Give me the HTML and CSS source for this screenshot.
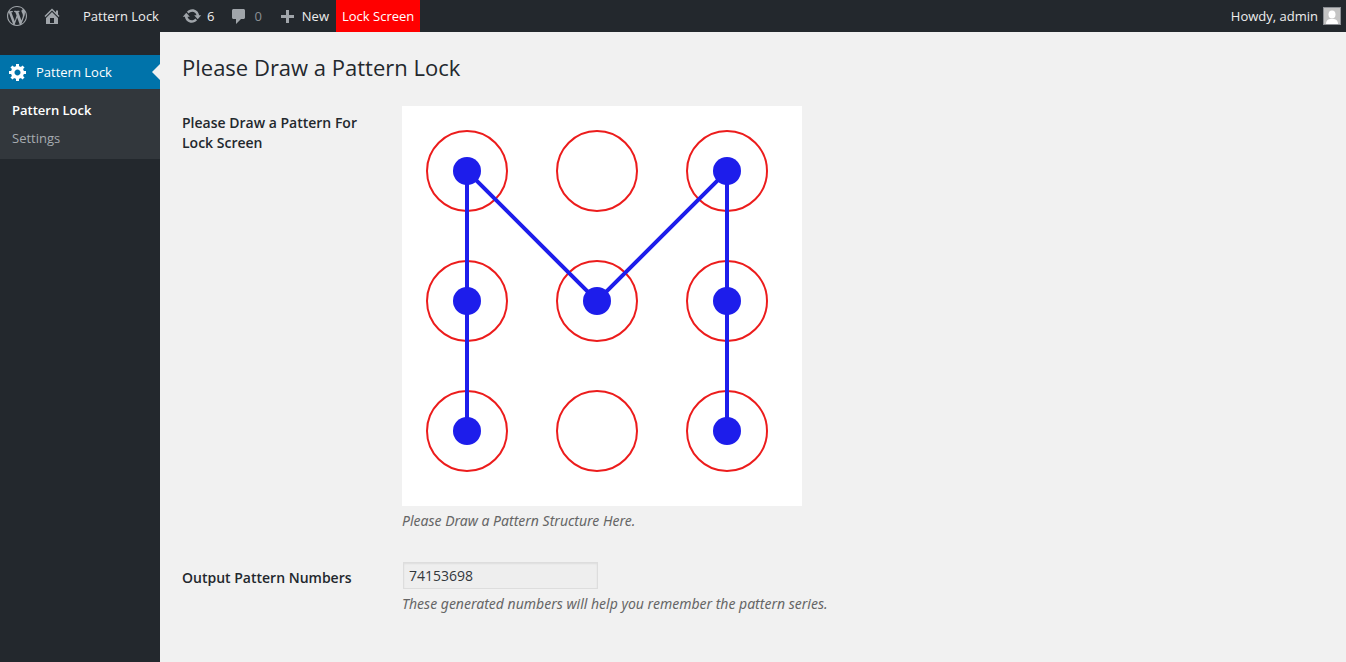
FILE: index.html
```
<!DOCTYPE html>
<html lang="en">
<head>
    <meta charset="UTF-8">
    <meta name="viewport" content="width=device-width, initial-scale=1.0">
    <title>Pattern Lock</title>
    <link rel="stylesheet" href="styles.css">
</head>
<body>
    <!-- admin bar -->
    <header class="adminbar">
        <a href="#" class="bar-item bar-logo" aria-label="WordPress">
            <svg class="icon" viewBox="0 0 20 20"><path d="M20 10c0-5.51-4.49-10-10-10C4.48 0 0 4.49 0 10c0 5.52 4.48 10 10 10 5.51 0 10-4.48 10-10zM7.78 15.37L4.37 6.22c.55-.02 1.17-.08 1.17-.08.5-.06.44-1.13-.06-1.11 0 0-1.45.11-2.37.11-.18 0-.37 0-.58-.01C4.12 2.69 6.87 1.11 10 1.11c2.33 0 4.45.87 6.05 2.34-.68-.11-1.65.39-1.65 1.58 0 .74.45 1.36.9 2.1.35.61.55 1.36.55 2.46 0 1.49-1.4 5-1.4 5l-3.03-8.37c.54-.02.82-.17.82-.17.5-.05.44-1.25-.06-1.22 0 0-1.44.12-2.38.12-.87 0-2.33-.12-2.33-.12-.5-.03-.56 1.2-.06 1.22l.92.08 1.26 3.41zM17.41 10c.24-.64.74-1.87.43-4.25.7 1.29 1.05 2.71 1.05 4.25 0 3.29-1.73 6.24-4.4 7.78.97-2.59 1.94-5.2 2.92-7.78zM6.1 18.09C3.12 16.65 1.11 13.53 1.11 10c0-1.3.23-2.48.72-3.59C3.25 10.3 4.67 14.2 6.1 18.09zm4.03-6.63l2.58 6.98c-.86.29-1.76.45-2.71.45-.79 0-1.57-.11-2.29-.33.81-2.38 1.62-4.74 2.42-7.1z"/></svg>
        </a>
        <a href="#" class="bar-item bar-site">
            <svg class="icon" viewBox="0 0 20 20"><path d="M16 8.5l1.53 1.53-1.06 1.06L10 4.6l-6.47 6.49-1.06-1.06L10 2.5l4 4v-2h2v4zm-6-2.46l6 5.99V18H4v-5.97zM12 17v-5H8v5h4z"/></svg>
            <span class="site-name">Pattern Lock</span>
        </a>
        <a href="#" class="bar-item bar-updates">
            <svg class="icon" viewBox="0 0 20 20"><path d="M10.2 3.28c3.53 0 6.43 2.61 6.92 6h2.08l-3.5 4-3.5-4h2.32c-.45-1.97-2.21-3.45-4.32-3.45-1.45 0-2.73.71-3.54 1.78L4.95 5.66C6.23 4.2 8.11 3.28 10.2 3.28zm-.4 13.44c-3.52 0-6.43-2.61-6.92-6H.8l3.5-4c1.17 1.33 2.33 2.67 3.5 4H5.48c.45 1.97 2.21 3.45 4.32 3.45 1.45 0 2.73-.71 3.54-1.78l1.71 1.95c-1.28 1.46-3.15 2.38-5.25 2.38z"/></svg>
            <span>6</span>
        </a>
        <a href="#" class="bar-item bar-comments">
            <svg class="icon" viewBox="0 0 20 20"><path d="M4.500 3h10c.8 0 1.500.7 1.500 1.500v7c0 .8-.7 1.500-1.500 1.500H12l-5 5v-5H4.500C3.700 13 3 12.300 3 11.500v-7C3 3.700 3.700 3 4.500 3z"/></svg>
            <span>0</span>
        </a>
        <a href="#" class="bar-item bar-new">
            <svg class="icon" viewBox="0 0 20 20"><path d="M17 9v3h-5v5H9v-5H4V9h5V4h3v5h5z"/></svg>
            <span>New</span>
        </a>
        <a href="#" class="bar-item bar-lock">Lock Screen</a>
        <a href="#" class="bar-item bar-account">
            <span>Howdy, admin</span>
            <svg class="avatar" viewBox="0 0 18 18">
                <rect width="18" height="18" fill="#8c8f94"/>
                <rect x="1" y="1" width="16" height="16" fill="#c4c4c4"/>
                <ellipse cx="9" cy="7.500" rx="3.500" ry="4" fill="#fff"/>
                <path d="M3 17c0-3 1.500-4.500 4-5h4c2.500.5 4 2 4 5z" fill="#fff"/>
            </svg>
        </a>
    </header>

    <div class="wrapper">
        <!-- side menu -->
        <nav class="sidebar">
            <a href="#" class="menu-top">
                <svg class="icon" viewBox="0 0 20 20"><path d="M18 12h-2.18c-.17.7-.44 1.35-.81 1.93l1.54 1.54-2.1 2.1-1.54-1.54c-.58.36-1.23.63-1.91.79V19H8v-2.18c-.68-.16-1.33-.43-1.91-.79l-1.54 1.54-2.12-2.12 1.54-1.54c-.36-.58-.63-1.23-.79-1.91H1V9.03h2.17c.16-.7.44-1.35.8-1.94L2.43 5.55l2.1-2.1 1.54 1.54c.58-.37 1.24-.64 1.93-.81V2h3v2.18c.68.16 1.33.43 1.91.79l1.54-1.54 2.12 2.12-1.54 1.54c.36.59.64 1.24.8 1.94H18V12zm-8.5 1.5c1.66 0 3-1.34 3-3s-1.34-3-3-3-3 1.34-3 3 1.34 3 3 3z"/></svg>
                <span>Pattern Lock</span>
            </a>
            <ul class="submenu">
                <li><a href="#" class="current">Pattern Lock</a></li>
                <li><a href="#">Settings</a></li>
            </ul>
        </nav>

        <main class="content">
            <h1>Please Draw a Pattern Lock</h1>

            <form class="form">
                <div class="form-row">
                    <div class="form-label">Please Draw a Pattern For Lock Screen</div>
                    <div class="form-field">
                        <svg class="pattern" viewBox="0 0 400 400" role="img" aria-label="Pattern 74153698">
                            <g class="ring">
                                <circle cx="65" cy="65" r="40"/>
                                <circle cx="195" cy="65" r="40"/>
                                <circle cx="325" cy="65" r="40"/>
                                <circle cx="65" cy="195" r="40"/>
                                <circle cx="195" cy="195" r="40"/>
                                <circle cx="325" cy="195" r="40"/>
                                <circle cx="65" cy="325" r="40"/>
                                <circle cx="195" cy="325" r="40"/>
                                <circle cx="325" cy="325" r="40"/>
                            </g>
                            <polyline class="line" points="65,325 65,195 65,65 195,195 325,65 325,195 325,325"/>
                            <g class="dot">
                                <circle cx="65" cy="325" r="14"/>
                                <circle cx="65" cy="195" r="14"/>
                                <circle cx="65" cy="65" r="14"/>
                                <circle cx="195" cy="195" r="14"/>
                                <circle cx="325" cy="65" r="14"/>
                                <circle cx="325" cy="195" r="14"/>
                                <circle cx="325" cy="325" r="14"/>
                            </g>
                        </svg>
                        <p class="description">Please Draw a Pattern Structure Here.</p>
                    </div>
                </div>

                <div class="form-row">
                    <label class="form-label" for="pattern-numbers">Output Pattern Numbers</label>
                    <div class="form-field">
                        <input type="text" id="pattern-numbers" class="numbers" value="74153698" readonly>
                        <p class="description">These generated numbers will help you remember the pattern series.</p>
                    </div>
                </div>
            </form>
        </main>
    </div>
</body>
</html>
```
FILE: styles.css
```
* {
    margin: 0;
    padding: 0;
    box-sizing: border-box;
}

body {
    display: flex;
    flex-direction: column;
    min-height: 100vh;
    font-family: "Segoe UI", "Open Sans", "Noto Sans", sans-serif;
    font-size: 13px;
    color: #23282d;
    background: #f1f1f1;
}

a {
    text-decoration: none;
}

.icon {
    width: 20px;
    height: 20px;
    flex: none;
    fill: #a0a5aa;
}

/* admin bar */
.adminbar {
    display: flex;
    height: 32px;
    background: #23282d;
}

.bar-item {
    display: flex;
    align-items: center;
    gap: 5px;
    height: 32px;
    color: #eee;
    white-space: nowrap;
}

.bar-logo {
    padding: 0 8px 0 7px;
}

.bar-site {
    gap: 21px;
    padding: 0 16px 0 7px;
}

.bar-updates {
    padding: 0 8px 0 7px;
}

.bar-comments {
    padding: 0 8px 0 7px;
    color: #8a8f94;
}

.bar-new {
    padding: 0 7px;
}

.bar-lock {
    padding: 0 6px;
    color: #fff;
    background: #f00;
}

.bar-account {
    margin-left: auto;
    padding-right: 5px;
}

.avatar {
    width: 18px;
    height: 18px;
}

/* side menu */
.wrapper {
    display: flex;
    flex: 1;
}

.sidebar {
    width: 160px;
    flex: none;
    padding-top: 23px;
    background: #23282d;
}

.menu-top {
    position: relative;
    display: flex;
    align-items: center;
    gap: 8px;
    height: 34px;
    padding: 0 8px;
    color: #fff;
    background: #0073aa;
}

.menu-top .icon {
    fill: #fff;
}

/* arrow pointing at the page */
.menu-top::after {
    content: "";
    position: absolute;
    top: 9px;
    right: 0;
    border: 8px solid transparent;
    border-left: 0;
    border-right-color: #f1f1f1;
}

.submenu {
    padding: 7px 0;
    list-style: none;
    background: #32373c;
}

.submenu a {
    display: block;
    padding: 5px 12px;
    line-height: 18px;
    color: #a6abb0;
}

.submenu .current {
    font-weight: 600;
    color: #fff;
}

/* page */
.content {
    flex: 1;
    padding: 20px 22px;
}

h1 {
    font-size: 22px;
    font-weight: 400;
    line-height: 30px;
}

.form {
    margin-top: 24px;
}

.form-row {
    display: flex;
    gap: 20px;
    margin-bottom: 30px;
}

.form-label {
    width: 200px;
    flex: none;
    padding: 7px 10px 0 0;
    font-size: 14px;
    font-weight: 600;
    line-height: 20px;
}

.form-field {
    flex: 1;
}

.pattern {
    display: block;
    width: 100%;
    max-width: 400px;
    background: #fff;
}

.ring {
    fill: none;
    stroke: #ec1c1c;
    stroke-width: 2;
}

.line {
    fill: none;
    stroke: #1d1deb;
    stroke-width: 4;
}

.dot {
    fill: #1d1deb;
}

.description {
    margin-top: 5px;
    font-family: "Segoe UI", "Noto Sans", sans-serif;
    font-size: 14px;
    font-style: italic;
    line-height: 20px;
    color: #666;
}

.numbers {
    display: block;
    width: 195px;
    height: 27px;
    margin: 1px;
    padding: 3px 5px;
    border: 1px solid #ddd;
    font-family: inherit;
    font-size: 14px;
    color: #32373c;
    background: #eee;
    box-shadow: inset 0 1px 2px rgba(0, 0, 0, 0.07);
}
```
